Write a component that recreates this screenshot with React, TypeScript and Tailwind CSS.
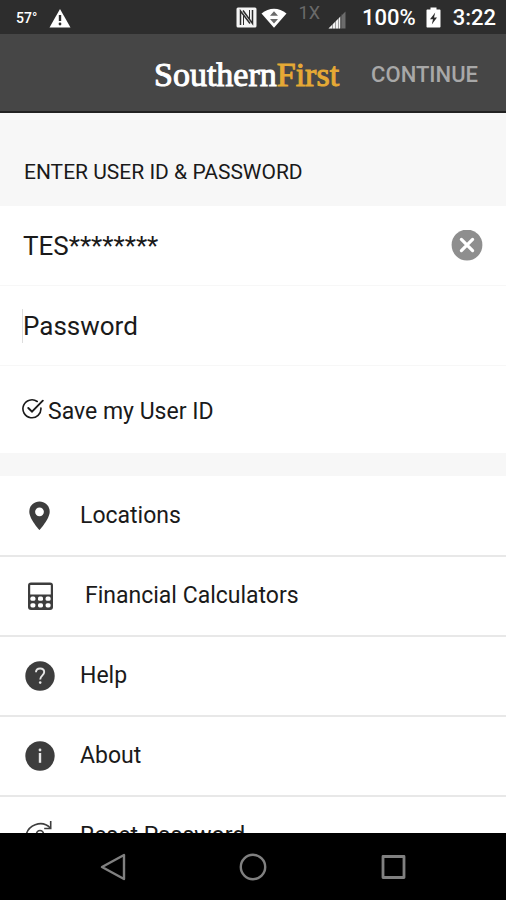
import React, { useState } from 'react';

interface IconProps {
  className?: string;
}

const WarningIcon: React.FC<IconProps> = ({ className }) => (
  <svg viewBox="0 0 22 20" className={className} aria-hidden="true">
    <path d="M11 1 L21.5 19.5 H0.5 Z" fill="#fff" />
    <path d="M11 7v6" stroke="#2d2d2d" strokeWidth="2.4" />
    <circle cx="11" cy="16" r="1.4" fill="#2d2d2d" />
  </svg>
);

const NfcIcon: React.FC<IconProps> = ({ className }) => (
  <svg viewBox="0 0 21 21" className={className} aria-hidden="true">
    <rect x="0.5" y="0.5" width="20" height="20" rx="1.5" fill="#f5f5f5" />
    <path d="M4.500 18V4L14 16.500M7 3.500l9.500 13V3" fill="none" stroke="#2d2d2d" strokeWidth="1.5" />
    <path d="M7.500 8.500V18M13.500 3v9.500" fill="none" stroke="#2d2d2d" strokeWidth="1" />
  </svg>
);

const WifiIcon: React.FC<IconProps> = ({ className }) => (
  <svg viewBox="0 0 26 20" className={className} aria-hidden="true">
    <path d="M0.5 5.5C8-0.8 18-0.8 25.5 5.5L13 19.8Z" fill="#fff" />
    <path d="M9 7.8L13 3.2l4 4.6ZM9 11h8l-4 4.6Z" fill="#6a6a6a" />
  </svg>
);

const SignalIcon: React.FC<IconProps> = ({ className }) => (
  <svg viewBox="0 0 18 18" className={className} aria-hidden="true">
    <path d="M17.5 0.5v17H0.5Z" fill="#6b6b6b" />
    <path d="M12 6v11.5H0.5Z" fill="#f2f2f2" />
    <path d="M4.5 13v5M7.5 10v8M10.5 7v11M13.5 3v15" stroke="#4a4a4a" strokeWidth="0.5" />
  </svg>
);

const BatteryIcon: React.FC<IconProps> = ({ className }) => (
  <svg viewBox="0 0 15 21" className={className} aria-hidden="true">
    <path d="M4.5 0.5h6v2h3c0.6 0 1 0.4 1 1v16c0 0.6-0.4 1-1 1h-12c-0.6 0-1-0.4-1-1v-16c0-0.6 0.4-1 1-1h3Z" fill="#fff" />
    <path d="M9.2 5.5L4 12.2h3L5.8 17.5 11 10.6H8Z" fill="#2d2d2d" />
  </svg>
);

const ClearIcon: React.FC<IconProps> = ({ className }) => (
  <svg viewBox="0 0 32 32" className={className} aria-hidden="true">
    <circle cx="16" cy="15" r="15.4" fill="#8e8e8e" />
    <path d="M10.4 9.4l11.2 11.2M21.6 9.4L10.4 20.6" stroke="#fff" strokeWidth="3.2" strokeLinecap="round" />
  </svg>
);

const CheckIcon: React.FC<IconProps> = ({ className }) => (
  <svg viewBox="0 0 22 22" className={className} fill="none" stroke="#1a1a1a" strokeWidth="1.6" strokeLinecap="round" aria-hidden="true">
    <path d="M15.2 3.5A9 9 0 1 0 18.9 10" />
    <path className="hidden in-data-checked:inline" d="M6.3 10l3.7 3.6L20.8 2.7" strokeWidth="1.9" />
  </svg>
);

const PinIcon: React.FC<IconProps> = ({ className }) => (
  <svg viewBox="0 0 30 30" className={className} aria-hidden="true">
    <path
      d="M14.5 0.5C8.6 0.5 4.3 4.9 4.3 10.7c0 7.2 10.2 18.3 10.2 18.3S24.7 17.9 24.7 10.7C24.7 4.9 20.4 0.5 14.5 0.5Zm0 5.9a4.4 4.4 0 1 1 0 8.8 4.4 4.4 0 0 1 0-8.8Z"
      fill="#3d3d3d"
      fillRule="evenodd"
    />
  </svg>
);

const CalculatorIcon: React.FC<IconProps> = ({ className }) => (
  <svg viewBox="0 0 30 30" className={className} aria-hidden="true">
    <rect x="3" y="1.5" width="25" height="27.5" rx="3" fill="#3d3d3d" />
    <rect x="5.2" y="4" width="20.6" height="9.5" rx="0.5" fill="#fff" />
    {[7.9, 15.5, 23.1].map((x) => (
      <g key={x} fill="#fff">
        <rect x={x - 2.5} y="15.6" width="5" height="4.2" rx="1.6" />
        <rect x={x - 2.5} y="22.2" width="5" height="4.2" rx="1.6" />
      </g>
    ))}
  </svg>
);

const HelpIcon: React.FC<IconProps> = ({ className }) => (
  <svg viewBox="0 0 30 30" className={className} aria-hidden="true">
    <circle cx="15" cy="15" r="14.7" fill="#3d3d3d" />
    <path d="M11 11.3c0-2.3 1.6-3.8 4.1-3.8s4.1 1.4 4.1 3.6c0 3.2-4 3.4-4 7.5" fill="none" stroke="#e6e6e6" strokeWidth="1.9" />
    <circle cx="15.2" cy="21.6" r="1.3" fill="#e6e6e6" />
  </svg>
);

const InfoIcon: React.FC<IconProps> = ({ className }) => (
  <svg viewBox="0 0 30 30" className={className} aria-hidden="true">
    <circle cx="15" cy="15" r="14.7" fill="#3d3d3d" />
    <path d="M15 12v9.8" stroke="#e6e6e6" strokeWidth="2.4" />
    <circle cx="15" cy="9" r="1.4" fill="#e6e6e6" />
  </svg>
);

const ResetIcon: React.FC<IconProps> = ({ className }) => (
  <svg viewBox="0 0 30 30" className={className} fill="none" stroke="#3d3d3d" strokeWidth="1.6" aria-hidden="true">
    <path d="M0.8 17C1.5 3.5 17-1.5 25.3 7" />
    <path d="M25.7 0v7.500h-6.5" />
    <path d="M29 16a14 14 0 0 1-25 6" />
    <path d="M11.5 14v-1a3.500 3.500 0 0 1 7 0v1" />
    <rect x="10" y="14" width="10" height="7" rx="1" />
  </svg>
);

const menuItems = [
  { href: '#locations', label: 'Locations', icon: PinIcon },
  { href: '#calculators', label: 'Financial Calculators', icon: CalculatorIcon, wide: true },
  { href: '#help', label: 'Help', icon: HelpIcon },
  { href: '#about', label: 'About', icon: InfoIcon },
  { href: '#reset', label: 'Reset Password', icon: ResetIcon }
];

const StatusBar = () => (
  <div className="flex h-[34px] shrink-0 items-center justify-between bg-[#2d2d2d] pt-px pr-[10px] pl-4 text-white">
    <div className="flex items-center gap-3">
      <span className="text-sm font-medium">57°</span>
      <WarningIcon className="h-5 w-[22px]" />
    </div>
    <div className="flex items-center">
      <NfcIcon className="h-[21px] w-[21px]" />
      <WifiIcon className="ml-1 h-5 w-[26px]" />
      <span className="ml-3 self-start text-lg leading-6 text-[#6a6a6a]">1X</span>
      <SignalIcon className="mt-1 ml-2 h-[18px] w-[18px]" />
      <span className="ml-4 text-[22px] font-medium">100%</span>
      <BatteryIcon className="ml-[10px] h-[21px] w-[15px]" />
      <span className="ml-3 text-[22px] font-medium">3:22</span>
    </div>
  </div>
);

const NavigationBar = () => (
  <div className="flex h-[67px] shrink-0 items-center justify-center gap-[112px] bg-black">
    <button type="button" aria-label="Back">
      <svg viewBox="0 0 28 28" className="h-7 w-7" fill="none" stroke="#808080" strokeWidth="2.4" strokeLinejoin="round">
        <path d="M25 2v24L3 14Z" />
      </svg>
    </button>
    <button type="button" aria-label="Home">
      <svg viewBox="0 0 28 28" className="h-7 w-7" fill="none" stroke="#808080" strokeWidth="2.4">
        <circle cx="14" cy="14" r="12.2" />
      </svg>
    </button>
    <button type="button" aria-label="Recent apps">
      <svg viewBox="0 0 28 28" className="h-7 w-7" fill="none" stroke="#808080" strokeWidth="2.8" strokeLinejoin="round">
        <rect x="4" y="3.5" width="21" height="21" />
      </svg>
    </button>
  </div>
);

const App: React.FC = () => {
  const [userId, setUserId] = useState('TES********');
  const [password, setPassword] = useState('');
  const [saveId, setSaveId] = useState(true);

  return (
    <div className="flex h-screen flex-col bg-white font-[Roboto,sans-serif] text-[#1a1a1a]">
      <StatusBar />

      <header className="flex h-[79px] shrink-0 items-center justify-end gap-8 border-b-2 border-[#222222] bg-[#464646] pt-1 pr-7">
        <h1 className="font-['Liberation_Serif',serif] text-[34px] leading-10 text-white [-webkit-text-stroke:1px]">
          Southern<span className="text-[#e5a935]">First</span>
        </h1>
        <button type="submit" form="login" className="text-[22px] font-medium text-[#a8a8a8]">
          CONTINUE
        </button>
      </header>

      <main className="flex-1 overflow-hidden bg-[#f7f7f7]">
        <form id="login" onSubmit={(e) => e.preventDefault()}>
          <h2 className="px-6 pt-[45px] pb-5 text-[21px] leading-7">ENTER USER ID &amp; PASSWORD</h2>

          <div className="flex h-20 items-center border-b border-[#f7f7f7] bg-white px-[23px]">
            <input
              type="text"
              aria-label="User ID"
              className="min-w-0 flex-1 pt-px text-[26px] outline-none"
              value={userId}
              onChange={(e) => setUserId(e.target.value)}
            />
            <button type="button" aria-label="Clear user ID" onClick={() => setUserId('')}>
              <ClearIcon className="h-8 w-8" />
            </button>
          </div>

          <div className="flex h-20 items-center border-b border-[#f7f7f7] bg-white px-[22px]">
            <input
              type="password"
              aria-label="Password"
              placeholder="Password"
              className="h-[34px] min-w-0 flex-1 border-l border-[#dddddd] pt-px text-[26px] outline-none placeholder:text-[#1a1a1a]"
              value={password}
              onChange={(e) => setPassword(e.target.value)}
            />
          </div>

          <div className="flex h-[87px] items-center bg-white px-[22px] pt-1">
            <label data-checked={saveId || undefined} className="flex gap-1 text-[23px] leading-7">
              <input
                type="checkbox"
                className="sr-only"
                checked={saveId}
                onChange={(e) => setSaveId(e.target.checked)}
              />
              <CheckIcon className="h-[22px] w-[22px]" />
              <span>Save my User ID</span>
            </label>
          </div>
        </form>

        <nav className="mt-[23px] bg-white pt-px">
          <ul>
            {menuItems.map((item) => (
              <li key={item.href} className="border-b-2 border-[#e8e8e8]">
                <a
                  href={item.href}
                  className={`flex h-[78px] items-center px-[25px] text-[23px] ${item.wide ? 'gap-[30px]' : 'gap-[25px]'}`}
                >
                  <item.icon className="h-[30px] w-[30px]" />
                  <span>{item.label}</span>
                </a>
              </li>
            ))}
          </ul>
        </nav>
      </main>

      <NavigationBar />
    </div>
  );
};

export default App;
